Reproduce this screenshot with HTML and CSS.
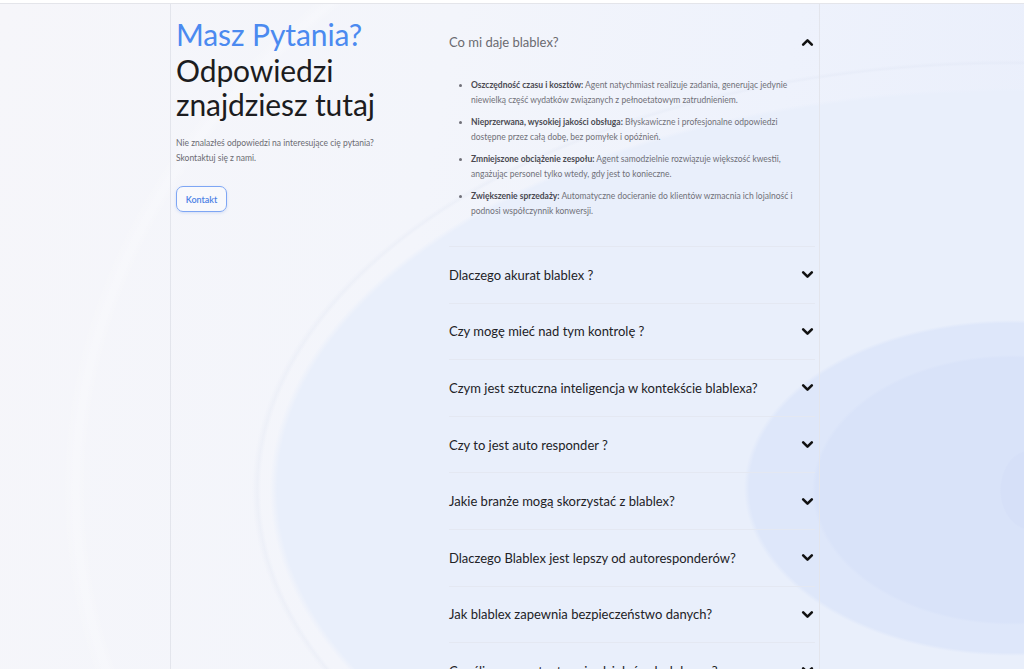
FILE: index.html
```html
<!DOCTYPE html>
<html lang="pl">
<head>
<meta charset="utf-8">
<title>FAQ</title>
<link rel="stylesheet" href="styles.css">
</head>
<body>
<div class="topbar"></div>
<main class="wrap">
  <section class="intro">
    <h1 class="title"><span class="title-blue">Masz Pytania?</span><span class="title-dark">Odpowiedzi znajdziesz tutaj</span></h1>
    <p class="lead">Nie znalazłeś odpowiedzi na interesujące cię pytania?<br>Skontaktuj się z nami.</p>
    <a class="btn" href="#">Kontakt</a>
  </section>
  <section class="faq">
    <div class="item open">
      <div class="q"><span>Co mi daje blablex?</span>
        <svg class="chev" viewBox="0 0 12 12"><path d="M2 8l4-4 4 4"/></svg></div>
      <ul class="answer">
        <li><b>Oszczędność czasu i kosztów:</b> Agent natychmiast realizuje zadania, generując jedynie niewielką część wydatków związanych z pełnoetatowym zatrudnieniem.</li>
        <li><b>Nieprzerwana, wysokiej jakości obsługa:</b> Błyskawiczne i profesjonalne odpowiedzi dostępne przez całą dobę, bez pomyłek i opóźnień.</li>
        <li><b>Zmniejszone obciążenie zespołu:</b> Agent samodzielnie rozwiązuje większość kwestii, angażując personel tylko wtedy, gdy jest to konieczne.</li>
        <li><b>Zwiększenie sprzedaży:</b> Automatyczne docieranie do klientów wzmacnia ich lojalność i podnosi współczynnik konwersji.</li>
      </ul>
    </div>
    <div class="item"><div class="q"><span>Dlaczego akurat blablex ?</span><svg class="chev" viewBox="0 0 12 12"><path d="M2 4l4 4 4-4"/></svg></div></div>
    <div class="item"><div class="q"><span>Czy mogę mieć nad tym kontrolę ?</span><svg class="chev" viewBox="0 0 12 12"><path d="M2 4l4 4 4-4"/></svg></div></div>
    <div class="item"><div class="q"><span>Czym jest sztuczna inteligencja w kontekście blablexa?</span><svg class="chev" viewBox="0 0 12 12"><path d="M2 4l4 4 4-4"/></svg></div></div>
    <div class="item"><div class="q"><span>Czy to jest auto responder ?</span><svg class="chev" viewBox="0 0 12 12"><path d="M2 4l4 4 4-4"/></svg></div></div>
    <div class="item"><div class="q"><span>Jakie branże mogą skorzystać z blablex?</span><svg class="chev" viewBox="0 0 12 12"><path d="M2 4l4 4 4-4"/></svg></div></div>
    <div class="item"><div class="q"><span>Dlaczego Blablex jest lepszy od autoresponderów?</span><svg class="chev" viewBox="0 0 12 12"><path d="M2 4l4 4 4-4"/></svg></div></div>
    <div class="item"><div class="q"><span>Jak blablex zapewnia bezpieczeństwo danych?</span><svg class="chev" viewBox="0 0 12 12"><path d="M2 4l4 4 4-4"/></svg></div></div>
    <div class="item"><div class="q"><span>Czy śliczny asystent może działać całodobowo?</span><svg class="chev" viewBox="0 0 12 12"><path d="M2 4l4 4 4-4"/></svg></div></div>
  </section>
</main>
</body>
</html>
```
FILE: styles.css
```css
* { box-sizing: border-box; }
html, body { height: 100%; }
body {
  margin: 0;
  font-family: Lato, "Open Sans", sans-serif;
  color: #1f1f24;
  overflow: hidden;
  background:
    radial-gradient(ellipse 30px 40px at 1030px 490px, #d6e0f8 0 96%, transparent 100%),
    radial-gradient(ellipse 200px 135px at 1012px 490px, #d9e3f9 0 98%, transparent 100%),
    radial-gradient(ellipse 268px 168px at 1012px 488px, #dee7fa 0 98%, transparent 100%),
    radial-gradient(ellipse 742px 402px at 1012px 490px, #e9effb 0 99%, transparent 100%),
    radial-gradient(ellipse 760px 430px at 1012px 490px, transparent 0 98.8%, rgba(210,218,236,0.18) 99.3%, transparent 100%),
    radial-gradient(ellipse 950px 720px at 1012px 490px, transparent 0 97.5%, rgba(255,255,255,0.25) 98.5%, transparent 100%),
    linear-gradient(100deg, #f6f6fa 0%, #f3f5fb 40%, #eef2fc 70%, #e9eefb 100%);
}
.topbar {
  height: 4px;
  background: #fff;
  border-bottom: 1px solid #e4e5ea;
}
.wrap {
  margin-left: 170px;
  width: 650px;
  min-height: 700px;
  border-left: 1px solid #e3e5ec;
  border-right: 1px solid #e3e5ec;
  display: flex;
}
.intro {
  width: 278px;
  flex: none;
  padding: 12px 0 0 5px;
}
.title {
  margin: 0;
  font-weight: 400;
  font-size: 30px;
  letter-spacing: -0.1px;
}
.title-blue {
  display: block;
  color: #4b8af0;
  line-height: 37px;
}
.title-dark {
  display: block;
  color: #1c1c20;
  line-height: 34px;
  width: 220px;
}
.lead {
  margin: 15px 0 0;
  font-size: 8.5px;
  line-height: 15px;
  color: #6b6b72;
}
.btn {
  display: inline-flex;
  align-items: center;
  justify-content: center;
  margin-top: 20px;
  width: 51px;
  height: 26px;
  border: 1.5px solid #7ea6f4;
  border-radius: 7px;
  color: #4d82e6;
  font-size: 9px;
  font-weight: 600;
  text-decoration: none;
  background: rgba(255,255,255,0.4);
  box-shadow: 0 1px 3px rgba(110,150,230,0.25);
}
.faq {
  flex: 1;
  padding: 0 4px 0 0;
}
.item {
  border-bottom: 1px solid #e4e8f2;
}
.q {
  display: flex;
  align-items: center;
  justify-content: space-between;
  padding: 19.8px 0;
  font-size: 13px;
  line-height: 16px;
  color: #222226;
}
.open .q {
  padding-top: 30px;
  padding-bottom: 0;
  color: #6a6a70;
}
.chev {
  width: 13px;
  height: 13px;
  flex: none;
  margin-right: 1px;
  fill: none;
  stroke: #111;
  stroke-width: 2.4;
  stroke-linecap: round;
  stroke-linejoin: round;
}
.answer {
  margin: 0;
  padding: 28px 20px 27px 22px;
  font-size: 8.5px;
  line-height: 15px;
  color: #707078;
}
.answer li { margin-bottom: 7px; }
.answer li:last-child { margin-bottom: 0; }
.answer b { color: #4a4a52; font-weight: 700; }
```
